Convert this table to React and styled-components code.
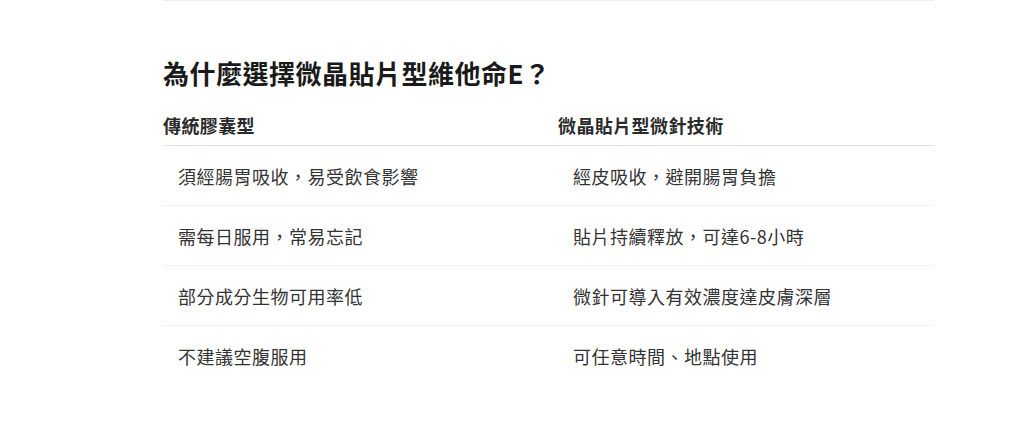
import React from "react";
import styled, { createGlobalStyle } from "styled-components";

const Global = createGlobalStyle`
  html, body { margin: 0; padding: 0; background: #fff; }
  body { font-family: "Noto Sans CJK TC", "Noto Sans", "Liberation Sans", sans-serif; }
`;

const Section = styled.section`
  margin-left: 163px;
  width: 771px;
  border-top: 1px solid #efefef;
  padding-top: 54px;
`;

const Title = styled.h2`
  margin: 0;
  font-size: 26px;
  line-height: 36px;
  font-weight: 700;
  color: #1a1a1a;
  letter-spacing: 0.5px;
`;

const Table = styled.div`
  margin-top: 17px;
  display: grid;
  grid-template-columns: 395px 376px;
`;

const HeadCell = styled.div`
  font-size: 18px;
  line-height: 28px;
  font-weight: 700;
  color: #2a2a2a;
  letter-spacing: 0.4px;
  padding: 3px 0 6px;
  border-bottom: 1px solid #e3e3e3;
`;

const Cell = styled.div`
  font-size: 18px;
  line-height: 28px;
  font-weight: 400;
  color: #333;
  letter-spacing: 0.5px;
  padding: 16px 16px 15px 15px;
  border-bottom: 1px solid ${(p) => (p.$last ? "transparent" : "#f2f2f2")};
`;

const rows = [
  ["須經腸胃吸收，易受飲食影響", "經皮吸收，避開腸胃負擔"],
  ["需每日服用，常易忘記", "貼片持續釋放，可達6-8小時"],
  ["部分成分生物可用率低", "微針可導入有效濃度達皮膚深層"],
  ["不建議空腹服用", "可任意時間、地點使用"],
];

export default function App() {
  return (
    <>
      <Global />
      <Section>
        <Title>為什麼選擇微晶貼片型維他命E？</Title>
        <Table>
          <HeadCell>傳統膠囊型</HeadCell>
          <HeadCell>微晶貼片型微針技術</HeadCell>
          {rows.map((r, i) => (
            <React.Fragment key={i}>
              <Cell $last={i === rows.length - 1}>{r[0]}</Cell>
              <Cell $last={i === rows.length - 1}>{r[1]}</Cell>
            </React.Fragment>
          ))}
        </Table>
      </Section>
    </>
  );
}
